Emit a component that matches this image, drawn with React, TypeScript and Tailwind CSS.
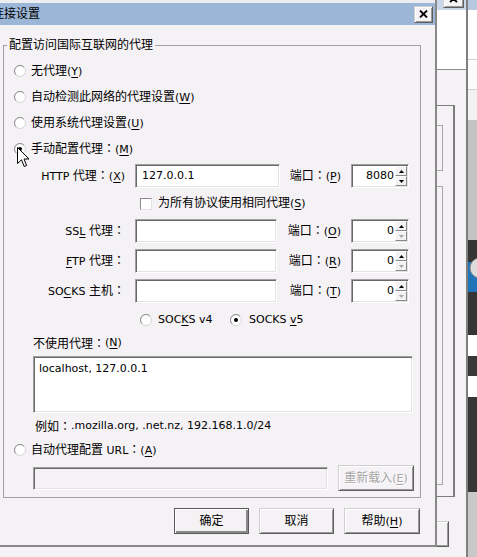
import React from 'react';

const CJK = /([\u3000-\u303f\u3400-\u9fff\uff00-\uffef]+)/;

const sunken =
  'border border-t-[#a0a0a0] border-l-[#a0a0a0] border-r-white border-b-white shadow-[inset_1px_1px_0_#696969,inset_-1px_-1px_0_#e3e3e3]';
const raised =
  'border border-t-[#cfcfcf] border-l-[#cfcfcf] border-r-[#5f5f5f] border-b-[#5f5f5f] shadow-[inset_1px_1px_0_#fff,inset_-1px_-1px_0_#9a9a9a]';

// centred full-width colon, as the old dialog font draws it
function cjkRun(q: string, key: string) {
  return (
    <span key={key} className="text-[12px]">
      {q.split(/(：)/).map((r, k) =>
        r === '：' ? (
          <span key={k} className="font-['Noto_Sans_CJK_TC',sans-serif]">
            ：
          </span>
        ) : (
          <React.Fragment key={k}>{r}</React.Fragment>
        )
      )}
    </span>
  );
}

// '&' marks the access key (drawn underlined); CJK runs get 12px, latin stays 11px
function Label({ text }: { text: string }) {
  const parts = text.split(/(&.)/);
  return (
    <>
      {parts.map((p, i) => {
        if (p.length === 2 && p[0] === '&') {
          return (
            <u key={i} className="underline underline-offset-[2px]">
              {p[1]}
            </u>
          );
        }
        return p.split(CJK).map((q, j) =>
          CJK.test(q) ? cjkRun(q, `${i}-${j}`) : <React.Fragment key={`${i}-${j}`}>{q}</React.Fragment>
        );
      })}
    </>
  );
}

function Radio({ checked = false }: { checked?: boolean }) {
  return (
    <svg width="12" height="12" viewBox="0 0 12 12" className="shrink-0">
      <circle cx="6" cy="6" r="5.5" fill="#fff" stroke="#d4d4d4" />
      <path d="M2.1 9.9 A5.5 5.5 0 0 1 9.9 2.1" fill="none" stroke="#8f8f8f" />
      {checked && <circle cx="6" cy="6" r="2" fill="#000" />}
    </svg>
  );
}

function Checkbox() {
  return (
    <div className="w-[12px] h-[12px] shrink-0 bg-white border border-t-[#8a8a8a] border-l-[#8a8a8a] border-r-[#e2e2e2] border-b-[#e2e2e2]" />
  );
}

function Spin({ up, enabled }: { up?: boolean; enabled: boolean }) {
  const c = enabled ? '#000' : '#a8a8a8';
  return (
    <div className="flex-1 flex items-center justify-center bg-[#f3f1f3] border border-t-white border-l-white border-r-[#8a8a8a] border-b-[#8a8a8a]">
      <svg width="5" height="3" viewBox="0 0 5 3">
        {up ? <path d="M2.5 0 L5 3 L0 3 Z" fill={c} /> : <path d="M0 0 L5 0 L2.5 3 Z" fill={c} />}
      </svg>
    </div>
  );
}

function Port({ value, downEnabled }: { value: string; downEnabled: boolean }) {
  return (
    <div className={`w-[58px] h-[24px] bg-white flex p-[1px] ${sunken}`}>
      <div className="flex-1 flex items-center justify-end pr-[1px]">{value}</div>
      <div className="w-[12px] flex flex-col">
        <Spin up enabled />
        <Spin enabled={downEnabled} />
      </div>
    </div>
  );
}

function ProxyRow({
  label,
  value,
  inputClass,
  port,
  portLabel,
  downEnabled,
  className,
}: {
  label: string;
  value: string;
  inputClass: string;
  port: string;
  portLabel: string;
  downEnabled: boolean;
  className: string;
}) {
  return (
    <div className={`flex items-center w-[405px] ${className}`}>
      <div className="w-[121px] text-right whitespace-nowrap">
        <Label text={label} />
      </div>
      <div className={`ml-[10px] h-[24px] bg-white flex items-center pl-[6px] ${inputClass} ${sunken}`}>{value}</div>
      <div className="flex-1 text-right pr-[10px] whitespace-nowrap">
        <Label text={portLabel} />
      </div>
      <Port value={port} downEnabled={downEnabled} />
    </div>
  );
}

function Button({
  text,
  isDefault,
  disabled,
  className,
}: {
  text: string;
  isDefault?: boolean;
  disabled?: boolean;
  className: string;
}) {
  const frame = isDefault
    ? 'border border-[#5a5a5a] shadow-[inset_1px_1px_0_#fff,inset_-2px_-2px_0_#8a8a8a]'
    : raised;
  return (
    <div
      className={`h-[26px] flex items-center justify-center bg-[#f5f2f5] ${frame} ${className} ${
        disabled ? 'text-[#a6a6a6] [text-shadow:1px_1px_0_#fff]' : ''
      }`}
    >
      <span>
        <Label text={text} />
      </span>
    </div>
  );
}

function RadioRow({ text, checked, className }: { text: string; checked?: boolean; className: string }) {
  return (
    <div className={`flex items-center pl-[10px] gap-[5px] ${className}`}>
      <Radio checked={checked} />
      <span className="whitespace-nowrap">
        <Label text={text} />
      </span>
    </div>
  );
}

function BehindWindow() {
  return (
    <>
      <div className="absolute left-[400px] top-0 w-[66px] h-[557px] bg-[#f5f2f5]">
        <div className="h-[10px] bg-[#c9d7e8]" />
        <div className="h-[60px] bg-white border-b border-[#8c8c8c]" />
        <div className="absolute left-[27px] top-[105px] w-[28px] h-[392px] border-t border-b border-r-2 border-[#7d7d7d]" />
        <div className="absolute left-[27px] top-[125px] w-[16px] h-[46px] border border-[#a9a9a9]" />
        <div className="absolute left-[27px] top-[186px] w-[16px] h-[299px] border border-[#a9a9a9]" />
        <div className={`absolute left-[27px] top-[521px] w-[22px] h-[26px] ${raised}`} />
        <div className={`absolute left-[43px] -top-[10px] w-[21px] h-[18px] bg-[#f4f4f4] flex items-center justify-center ${raised}`}>
          <svg width="9" height="8" viewBox="0 0 9 8">
            <path d="M1 1 L8 7 M8 1 L1 7" stroke="#000" strokeWidth="1.8" />
          </svg>
        </div>
      </div>
      <div className="absolute left-[466px] top-0 w-[2px] h-[557px] bg-[#7f7f7f]" />
      <div className="absolute left-[468px] top-0 w-[9px] h-[557px] flex flex-col">
        <div className="h-[10px] bg-[#b5c8de]" />
        <div className="h-[50px] bg-white border-b border-[#cfcfcf]" />
        <div className="h-[30px] bg-[#fbfbfb] border-b border-[#cfcfcf]" />
        <div className="h-[30px] bg-[#f2f2f2]" />
        <div className="h-[120px] bg-[#c3c3c3]" />
        <div className="h-[95px] bg-[#353535]">
          <svg width="9" height="95" viewBox="0 0 9 95">
            <rect x="0" y="22" width="9" height="30" fill="#1f73b8" />
            <circle cx="12" cy="28" r="10" fill="#dcdcdc" stroke="#8a8a8a" />
          </svg>
        </div>
        <div className="h-[21px] bg-white" />
        <div className="h-[20px] bg-[#383838]" />
        <div className="h-[21px] bg-white" />
        <div className="h-[95px] bg-[#363636]" />
        <div className="flex-1 bg-[#c8c8c8]" />
      </div>
    </>
  );
}

export default function App() {
  return (
    <div className="relative w-[477px] h-[557px] overflow-hidden bg-[#f5f2f5] text-black text-[11px] leading-[14px] font-['DejaVu_Sans','Noto_Sans_CJK_SC',sans-serif]">
      <BehindWindow />

      <div className="absolute left-0 top-0 w-[437px] h-[547px] flex flex-col bg-[#f5f2f5] border-r-2 border-b-2 border-[#898989]">
        <div className="h-[3px] bg-[#eeeef2]" />
        <div className="h-[22px] bg-[#9bb6d6] flex items-center justify-between pr-[2px]">
          <span className="ml-[-8px] text-[12px]">连接设置</span>
          <div className={`w-[19px] h-[17px] bg-[#f5f2f5] flex items-center justify-center ${raised}`}>
            <svg width="9" height="8" viewBox="0 0 9 8">
              <path d="M1 0.5 L8 7.5 M8 0.5 L1 7.5" stroke="#000" strokeWidth="1.8" />
            </svg>
          </div>
        </div>

        <fieldset className="ml-[3px] mt-[13px] w-[418px] border border-[#a0a0a0] pt-[5px] pb-[6px] flex flex-col">
          <legend className="ml-[3px] px-[2px] leading-[14px]">
            <Label text="配置访问国际互联网的代理" />
          </legend>

          <RadioRow text="无代理(&Y)" className="h-[26px]" />
          <RadioRow text="自动检测此网络的代理设置(&W)" className="h-[26px]" />
          <RadioRow text="使用系统代理设置(&U)" className="h-[26px]" />
          <RadioRow text="手动配置代理：(&M)" checked className="h-[26px]" />

          <ProxyRow
            className="mt-[2px]"
            label="HTTP 代理：(&X)"
            value="127.0.0.1"
            inputClass="w-[145px]"
            portLabel="端口：(&P)"
            port="8080"
            downEnabled
          />
          <div className="h-[31px] flex items-center pl-[136px] gap-[6px]">
            <Checkbox />
            <span className="whitespace-nowrap">
              <Label text="为所有协议使用相同代理(&S)" />
            </span>
          </div>
          <ProxyRow
            className=""
            label="SS&L 代理："
            value=""
            inputClass="w-[142px]"
            portLabel="端口：(&O)"
            port="0"
            downEnabled={false}
          />
          <ProxyRow
            className="mt-[6px]"
            label="&FTP 代理："
            value=""
            inputClass="w-[142px]"
            portLabel="端口：(&R)"
            port="0"
            downEnabled={false}
          />
          <ProxyRow
            className="mt-[6px]"
            label="SO&CKS 主机："
            value=""
            inputClass="w-[142px]"
            portLabel="端口：(&T)"
            port="0"
            downEnabled={false}
          />

          <div className="mt-[5px] h-[24px] flex items-center pl-[136px]">
            <div className="w-[90px] flex items-center gap-[6px]">
              <Radio />
              <span>
                <Label text="SOC&KS v4" />
              </span>
            </div>
            <div className="flex items-center gap-[7px]">
              <Radio checked />
              <span>
                <Label text="SOCKS &v5" />
              </span>
            </div>
          </div>

          <div className="h-[22px] flex items-center pl-[29px]">
            <Label text="不使用代理：(&N)" />
          </div>
          <div className={`ml-[29px] mt-[2px] w-[380px] h-[57px] bg-white pl-[5px] pt-[5px] ${sunken}`}>
            localhost, 127.0.0.1
          </div>
          <div className="h-[26px] flex items-center pl-[31px] whitespace-nowrap">
            <Label text="例如：.mozilla.org, .net.nz, 192.168.1.0/24" />
          </div>
          <RadioRow text="自动代理配置 URL：(&A)" className="h-[22px]" />
          <div className="mt-[4px] h-[26px] flex items-center pl-[29px]">
            <div className={`w-[295px] h-[23px] bg-[#f5f2f5] ${sunken}`} />
            <Button text="重新载入(&E)" disabled className="ml-[10px] w-[76px]" />
          </div>
        </fieldset>

        <div className="mt-[10px] flex justify-end gap-[10px] pr-[15px]">
          <Button text="确定" isDefault className="w-[75px]" />
          <Button text="取消" className="w-[75px]" />
          <Button text="帮助(&H)" className="w-[76px]" />
        </div>
      </div>

      {/* mouse pointer over the manual proxy radio */}
      <svg className="absolute left-[17px] top-[147px]" width="13" height="21" viewBox="0 0 13 21">
        <path d="M0.5 0.5 V16.5 L4.5 12.8 L7.2 19.5 L9.6 18.5 L7 12 H12 Z" fill="#fff" stroke="#000" strokeLinejoin="round" />
      </svg>
    </div>
  );
}
